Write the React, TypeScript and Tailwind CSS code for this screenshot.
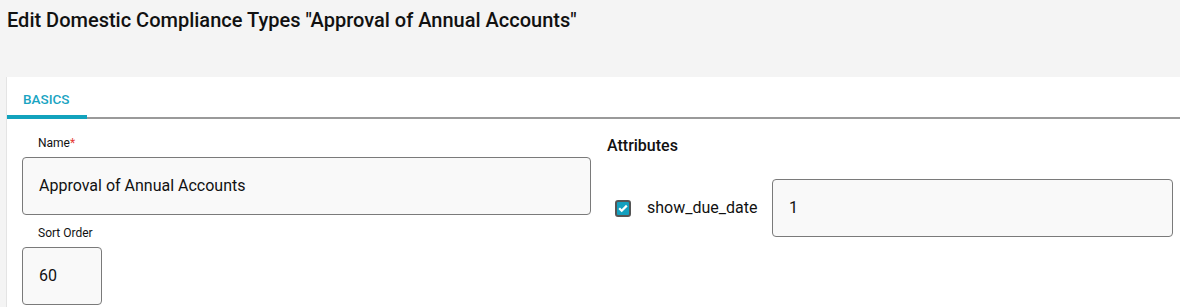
const inputCls =
  'w-full h-[58px] rounded-[4px] border border-[#7a7a7a] bg-[#f9f9f9] px-4 text-[16px] text-[#111] flex items-center';

function Field({ label, required, value, className }: { label: string; required?: boolean; value: string; className?: string }) {
  return (
    <div className={className}>
      <div className="h-[22px] pl-4 text-[12px] leading-[16px] text-[#111]">
        {label}
        {required && <span className="text-[#e53935]">*</span>}
      </div>
      <div className={inputCls}>{value}</div>
    </div>
  );
}

export default function App() {
  return (
    <div className="w-[1180px] h-[307px] overflow-hidden bg-[#f4f4f4] font-['Roboto',sans-serif]">
      <div className="h-[77px] pl-[7px] pt-[7px]">
        <h1 className="text-[20px] leading-[26px] font-medium text-[#111]">
          Edit Domestic Compliance Types "Approval of Annual Accounts"
        </h1>
      </div>
      <div className="ml-[6px] bg-white h-[230px] border-l border-[#e4e4e4]">
        <div className="relative h-[42px] border-b-2 border-[#9a9a9a]">
          <div className="absolute left-0 bottom-[-2px] w-[80px] h-[4px] bg-[#12a3bd]" />
          <div className="pl-[16px] pt-[14px] text-[13.5px] leading-[16px] font-medium text-[#19a4c2]">BASICS</div>
        </div>
        <div className="flex pl-[15px] pt-[16px] gap-[16px]">
          <div className="w-[569px] flex flex-col gap-[10px]">
            <Field label="Name" required value="Approval of Annual Accounts" />
            <Field label="Sort Order" value="60" className="w-[80px]" />
          </div>
          <div className="flex-1 pr-[7px]">
            <h2 className="pt-[1px] text-[16px] leading-[20px] font-medium text-[#111]">Attributes</h2>
            <div className="mt-[23px] flex items-center">
              <div className="ml-[8px] w-[17px] h-[17px] rounded-[3px] border-2 border-[#555] bg-[#14a0bf] flex items-center justify-center">
                <svg viewBox="0 0 12 12" className="w-[12px] h-[12px]">
                  <path d="M2.2 6.2l2.5 2.5L9.8 3.6" fill="none" stroke="white" strokeWidth="2.2" />
                </svg>
              </div>
              <span className="ml-[16px] w-[125px] shrink-0 text-[16px] text-[#111]">show_due_date</span>
              <div className={inputCls}>1</div>
            </div>
          </div>
        </div>
      </div>
    </div>
  );
}
